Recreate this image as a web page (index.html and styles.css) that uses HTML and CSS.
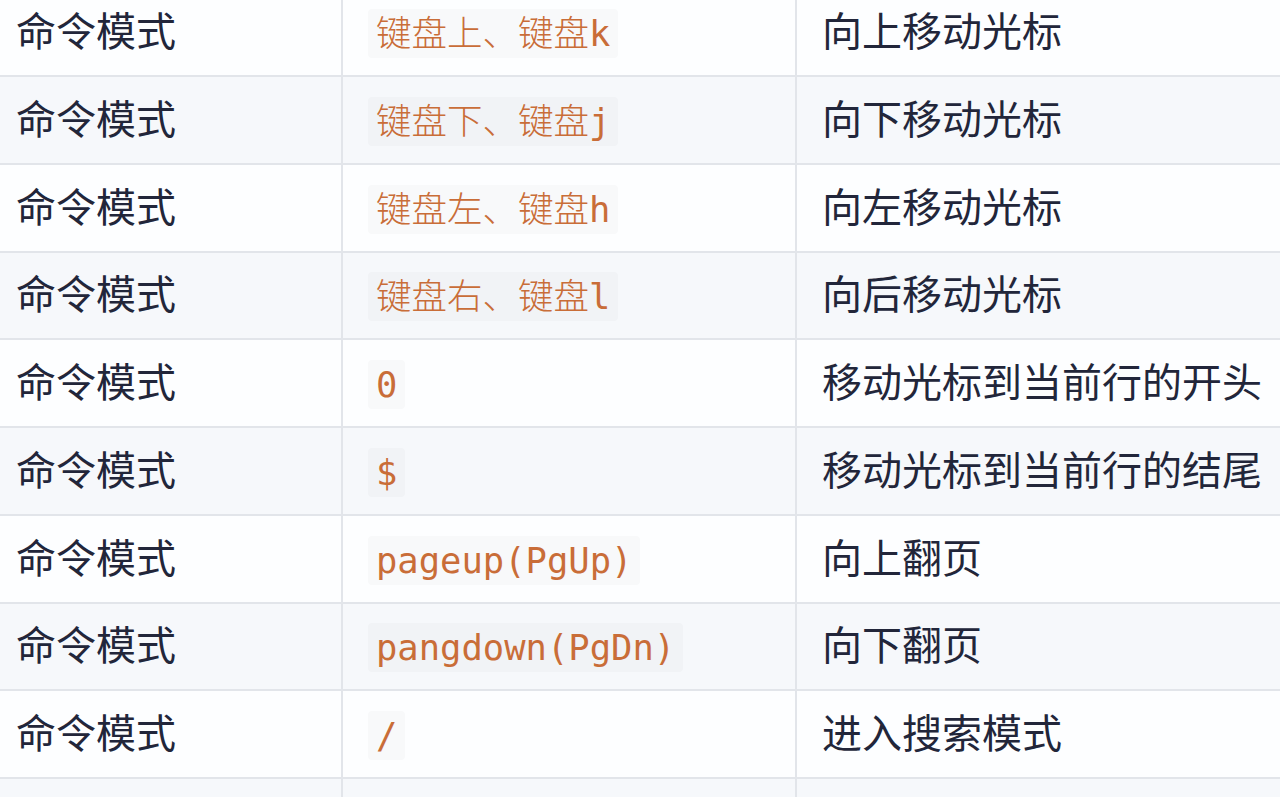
FILE: index.html
```html
<!DOCTYPE html>
<html lang="zh-CN">
<head>
<meta charset="utf-8">
<title>Vim 命令模式</title>
<link rel="stylesheet" href="styles.css">
</head>
<body>
<table class="keys">
  <tbody>
    <tr><td class="mode">命令模式</td><td class="key"><code>键盘上、键盘k</code></td><td class="desc">向上移动光标</td></tr>
    <tr><td class="mode">命令模式</td><td class="key"><code>键盘下、键盘j</code></td><td class="desc">向下移动光标</td></tr>
    <tr><td class="mode">命令模式</td><td class="key"><code>键盘左、键盘h</code></td><td class="desc">向左移动光标</td></tr>
    <tr><td class="mode">命令模式</td><td class="key"><code>键盘右、键盘l</code></td><td class="desc">向后移动光标</td></tr>
    <tr><td class="mode">命令模式</td><td class="key"><code>0</code></td><td class="desc">移动光标到当前行的开头</td></tr>
    <tr><td class="mode">命令模式</td><td class="key"><code>$</code></td><td class="desc">移动光标到当前行的结尾</td></tr>
    <tr><td class="mode">命令模式</td><td class="key"><code>pageup(PgUp)</code></td><td class="desc">向上翻页</td></tr>
    <tr><td class="mode">命令模式</td><td class="key"><code>pangdown(PgDn)</code></td><td class="desc">向下翻页</td></tr>
    <tr><td class="mode">命令模式</td><td class="key"><code>/</code></td><td class="desc">进入搜索模式</td></tr>
    <tr><td class="mode"></td><td class="key"></td><td class="desc"></td></tr>
  </tbody>
</table>
</body>
</html>
```

FILE: styles.css
```css
html, body {
  margin: 0;
  padding: 0;
  background: #fdfeff;
  overflow: hidden;
}

body {
  font-family: "Noto Sans CJK SC", "Noto Sans", sans-serif;
  color: #22263a;
}

.keys {
  border-collapse: collapse;
  table-layout: fixed;
  width: 1300px;
  margin-top: -12.75px;
  font-size: 40px;
}

.keys tr {
  height: 87.75px;
  background: #fdfeff;
}

.keys tr:nth-child(even) {
  background: #f6f8fb;
}

.keys td {
  border-top: 2px solid #e2e5ea;
  border-bottom: 2px solid #e2e5ea;
  padding: 0 0 6px 0;
  vertical-align: middle;
  white-space: nowrap;
}

.keys td.mode {
  width: 342px;
  padding-left: 16px;
  box-sizing: border-box;
  border-right: 2px solid #e2e5ea;
}

.keys td.key {
  width: 454px;
  padding-left: 25px;
  box-sizing: border-box;
  border-right: 2px solid #e2e5ea;
}

.keys td.desc {
  padding-left: 25px;
}

.keys code {
  font-family: "DejaVu Sans Mono", "Noto Sans CJK SC", monospace;
  font-weight: 300;
  font-size: 35.5px;
  color: #c96d38;
  background: rgba(27, 31, 35, 0.022);
  padding: 4px 8px;
  border-radius: 4px;
}
```
